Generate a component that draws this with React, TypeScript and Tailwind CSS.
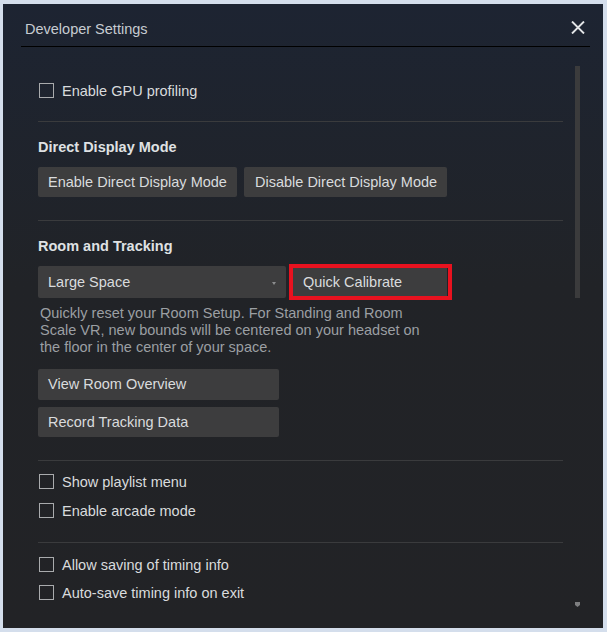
import React from "react";

const font = { fontFamily: '"Liberation Sans", Arial, sans-serif' };

function Checkbox({ label }: { label: string }) {
  return (
    <label className="flex h-full items-center">
      <span className="ml-px h-[15px] w-[15px] shrink-0 border border-[#a9abad]" />
      <span className="ml-[8px] pt-[2px] text-[14.5px] leading-[17px] text-[#d9dbdd]">{label}</span>
    </label>
  );
}

function Button({ children, className = "" }: { children: React.ReactNode; className?: string }) {
  return (
    <button
      className={
        "flex shrink-0 items-center whitespace-nowrap rounded-[2px] bg-[#3d3d3e] px-[10px] text-left text-[14.5px] leading-[17px] text-[#d9dbdd] " +
        className
      }
    >
      {children}
    </button>
  );
}

function Divider({ className = "" }: { className?: string }) {
  return <div className={"h-px w-full bg-[#3a3b3d] " + className} />;
}

export default function App() {
  return (
    <div style={font} className="h-[632px] w-[607px] bg-[#d4deec] pb-[4px] pl-[3px] pr-[4px] pt-[4px]">
      <div className="flex h-full w-full flex-col bg-linear-to-b from-[#1d2432] via-[#212327] via-45% to-[#222326]">
        {/* header */}
        <div className="ml-[18px] mr-[13px] flex items-start justify-between border-b border-black pb-[8px] pt-[17px]">
          <span className="pl-[4px] text-[14.5px] leading-[17px] text-[#c7ccd2]">Developer Settings</span>
          <svg width="14" height="13" viewBox="0 0 14 13" className="mr-[5px] mt-[0px]">
            <path d="M1 0.5 L13 12.5 M13 0.5 L1 12.5" stroke="#e2e4e6" strokeWidth="1.9" />
          </svg>
        </div>

        <div className="flex min-h-0 flex-1">
          {/* content */}
          <div className="ml-[35px] w-[525px] overflow-hidden">
            <div className="mt-[29px] h-[29px]">
              <Checkbox label="Enable GPU profiling" />
            </div>
            <Divider className="mt-[16px]" />

            <h3 className="mt-[17px] text-[14.5px] font-bold leading-[17px] text-[#dfe1e3]">Direct Display Mode</h3>
            <div className="mt-[11px] flex gap-[7px]">
              <Button className="h-[30px] w-[199px]">Enable Direct Display Mode</Button>
              <Button className="h-[30px] w-[203px] pl-[11px]">Disable Direct Display Mode</Button>
            </div>
            <Divider className="mt-[23px]" />

            <h3 className="mt-[17px] text-[14.5px] font-bold leading-[17px] text-[#dfe1e3]">Room and Tracking</h3>
            <div className="mt-[11px] flex gap-[7px]">
              <Button className="h-[32px] w-[248px] justify-between">
                <span>Large Space</span>
                <svg width="4" height="3" viewBox="0 0 4 3" className="mt-[2px]">
                  <polygon points="0,0 4,0 2,3" fill="#8c8d8f" />
                </svg>
              </Button>
              <div className="relative">
                <Button className="h-[32px] w-[154px]">Quick Calibrate</Button>
                <div className="pointer-events-none absolute -bottom-[2px] -left-[4px] -right-[5px] -top-[2px] border-[4px] border-[#e8121f]" />
              </div>
            </div>
            <p className="mt-[7px] w-[392px] pl-[2px] text-[14.5px] leading-[17px] text-[#9b9fa3]">
              Quickly reset your Room Setup. For Standing and Room Scale VR, new bounds will be centered on your headset on
              the floor in the center of your space.
            </p>
            <Button className="mt-[13px] h-[31px] w-[241px]">View Room Overview</Button>
            <Button className="mt-[7px] h-[30px] w-[241px]">Record Tracking Data</Button>
            <Divider className="mt-[23px]" />

            <div className="mt-[6px] h-[29px]">
              <Checkbox label="Show playlist menu" />
            </div>
            <div className="h-[29px]">
              <Checkbox label="Enable arcade mode" />
            </div>
            <Divider className="mt-[17px]" />

            <div className="mt-[7px] h-[28px]">
              <Checkbox label="Allow saving of timing info" />
            </div>
            <div className="h-[28px]">
              <Checkbox label="Auto-save timing info on exit" />
            </div>
          </div>

          {/* scrollbar */}
          <div className="ml-[11px] flex w-[6px] flex-col items-center">
            <div className="mt-[19px] h-[232px] w-[5px] bg-[#3b3b3c]" />
            <div className="flex-1" />
            <svg width="5" height="5" viewBox="0 0 5 5" className="mb-[21px]">
              <polygon points="0,0 5,0 5,3 2.5,5 0,3" fill="#7d7e80" />
            </svg>
          </div>
        </div>
      </div>
    </div>
  );
}
